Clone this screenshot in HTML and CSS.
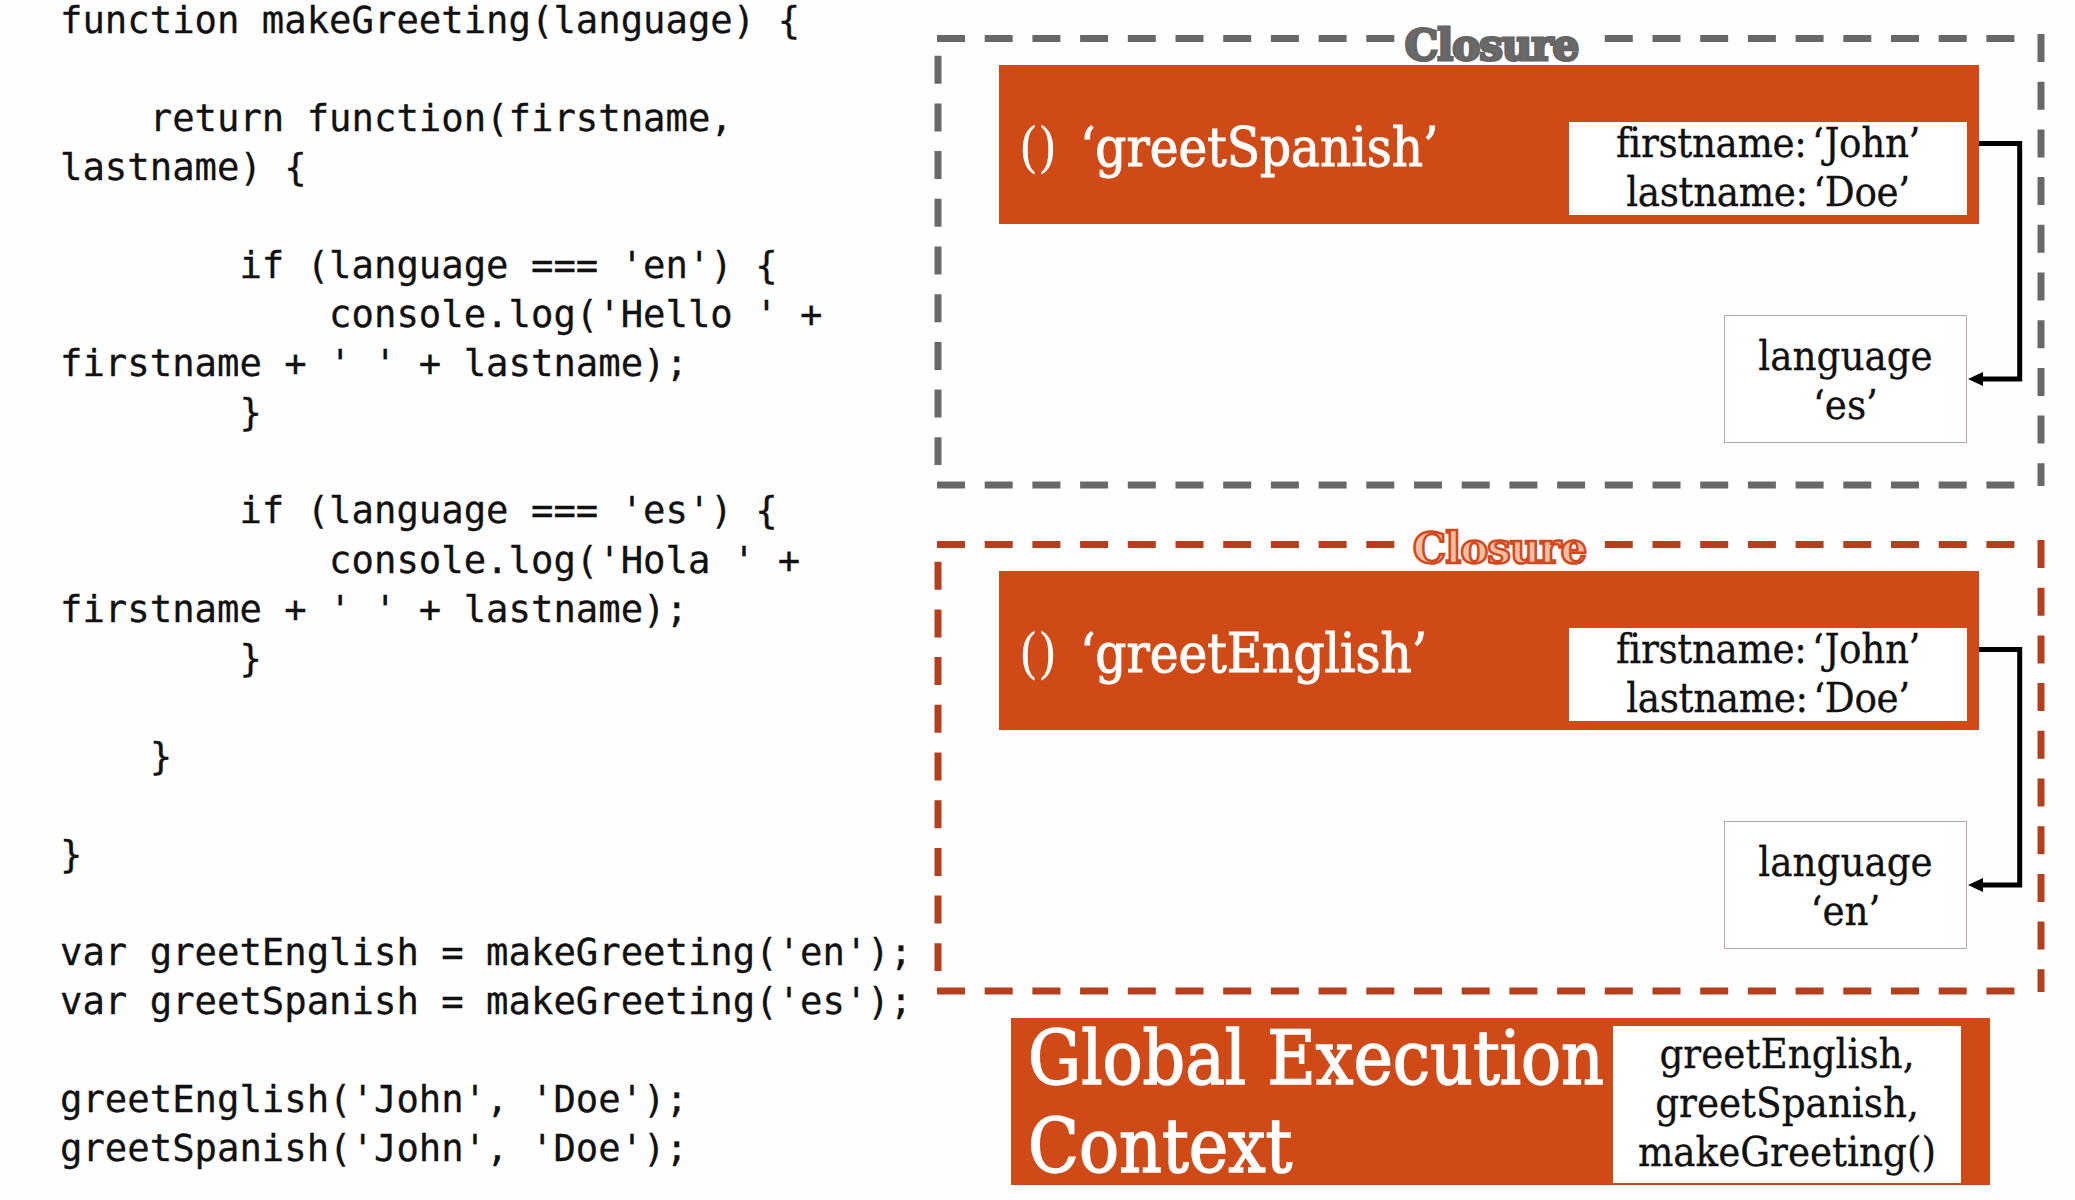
FILE: index.html
```html
<!DOCTYPE html>
<html lang="en">
<head>
<meta charset="utf-8">
<title>Closures</title>
<link rel="stylesheet" href="styles.css">
</head>
<body>
<main class="slide">
<pre class="code">function makeGreeting(language) {

    return function(firstname,
lastname) {

        if (language === 'en') {
            console.log('Hello ' +
firstname + ' ' + lastname);
        }

        if (language === 'es') {
            console.log('Hola ' +
firstname + ' ' + lastname);
        }

    }

}

var greetEnglish = makeGreeting('en');
var greetSpanish = makeGreeting('es');

greetEnglish('John', 'Doe');
greetSpanish('John', 'Doe');</pre>
<section class="diagram">
  <div class="closure closure-grey">
    <svg class="frame" viewBox="0 0 1105 448"><path class="dash" d="M0 .5H1078M0 447H1078"/><path class="dash" d="M1 17.7V427"/><path class="dash" d="M1104 -4V448"/></svg>
    <div class="closure-label">Closure</div>
    <div class="fn">
      <div class="fn-title"><span class="parens">()</span>‘greetSpanish’</div>
      <div class="scope"><div class="scope-text">firstname: ‘John’<br>lastname: ‘Doe’</div></div>
    </div>
    <div class="lang">language<br>‘es’</div>
    <svg class="link" viewBox="0 0 60 250"><path class="link-line" d="M12 5.5H52.7V241H14"/><path class="link-head" d="M1 241L16 234V248Z"/></svg>
  </div>
  <div class="closure closure-red">
    <svg class="frame" viewBox="0 0 1105 448"><path class="dash" d="M0 .5H1078M0 447H1078"/><path class="dash" d="M1 17.7V427"/><path class="dash" d="M1104 -4V448"/></svg>
    <div class="closure-label">Closure</div>
    <div class="fn">
      <div class="fn-title"><span class="parens">()</span>‘greetEnglish’</div>
      <div class="scope"><div class="scope-text">firstname: ‘John’<br>lastname: ‘Doe’</div></div>
    </div>
    <div class="lang">language<br>‘en’</div>
    <svg class="link" viewBox="0 0 60 250"><path class="link-line" d="M12 5.5H52.7V241H14"/><path class="link-head" d="M1 241L16 234V248Z"/></svg>
  </div>
  <div class="global">
    <div class="global-title">Global Execution Context</div>
    <div class="global-scope">greetEnglish,<br>greetSpanish,<br>makeGreeting()</div>
  </div>
</section>
</main>
</body>
</html>
```
FILE: styles.css
```css
html, body { margin: 0; padding: 0; background: #fff; }
.slide { display: flex; width: 2075px; height: 1200px; overflow: hidden; background: #fefefe; }
.code {
  width: 877px; margin: -4px 0 0; padding-left: 60px; flex: none;
  font-family: "DejaVu Sans Mono", monospace; font-size: 37.25px; line-height: 49.05px;
  color: #111; white-space: pre; -webkit-text-stroke: .3px #111;
}
.diagram { display: flex; flex-direction: column; padding-top: 38px; }
.closure { position: relative; width: 1105px; height: 448px; box-sizing: border-box; padding: 27px 63px 0 62px; }
.closure + .closure { margin-top: 58px; }
.frame { position: absolute; inset: 0; width: 100%; height: 100%; overflow: visible; }
.dash { fill: none; stroke-width: 7; stroke-dasharray: 28 19.7; }
.closure-grey .dash { stroke: #686868; }
.closure-red .dash { stroke: #b33f1c; }
.closure-label {
  position: absolute; left: 458px; width: 209px; text-align: center; background: #fefefe;
  font-family: "DejaVu Serif", serif; font-weight: 700; font-size: 42px; line-height: 40px; letter-spacing: -1px;
}
.closure-grey .closure-label { top: -12px; box-sizing: border-box; padding-right: 16px; color: #6a6a6a; -webkit-text-stroke: 3px #666; }
.closure-red .closure-label { top: -15px; color: #f4bda3; -webkit-text-stroke: 2.5px #d2491d; }
.fn {
  position: relative; display: flex; justify-content: space-between; height: 159px; box-sizing: border-box;
  padding: 0 12px 9px 20px; background: #d04a17;
}
.fn-title {
  align-self: center; color: #fff; font-family: "DejaVu Serif Condensed", "DejaVu Serif", serif;
  font-size: 54px; line-height: 60px; margin-top: 15px; white-space: nowrap; -webkit-text-stroke: 1px #fff;
}
.parens { margin-right: 23px; -webkit-text-stroke: 0; }
.scope, .lang, .global-scope {
  background: #fff; color: #111; text-align: center;
  font-family: "DejaVu Serif Condensed", "DejaVu Serif", serif; font-size: 41.5px; line-height: 49px;
  word-spacing: -6px; -webkit-text-stroke: .3px #111;
}
.scope { align-self: flex-end; width: 398px; height: 93px; }
.scope-text { margin-top: -4px; letter-spacing: -.35px; }
.lang {
  box-sizing: border-box; width: 243px; height: 128px; margin: 91px 12px 0 auto;
  padding-top: 15px; border: 1px solid #b9a5a8;
}
.link { position: absolute; left: 1030px; top: 100px; width: 60px; height: 250px; }
.link-line { fill: none; stroke: #000; stroke-width: 5; }
.link-head { fill: #000; }
.global {
  display: flex; justify-content: space-between; align-items: flex-start; box-sizing: border-box;
  width: 979px; height: 167px; margin: 26px 0 0 74px; padding: 8px 29px 2px 17px; background: #d04a17;
}
.global-title {
  width: 590px; color: #fff; font-family: "DejaVu Serif Condensed", "DejaVu Serif", serif;
  font-size: 74px; line-height: 88px; margin-top: -12px; -webkit-text-stroke: 1.5px #fff;
}
.global-scope { flex: none; width: 348px; height: 157px; box-sizing: border-box; padding-top: 3px; }
```
